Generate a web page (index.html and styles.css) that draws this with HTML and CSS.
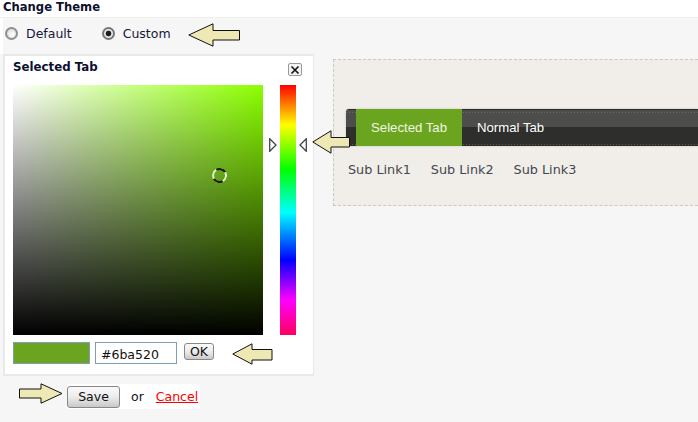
FILE: index.html
```html
<!DOCTYPE html>
<html lang="en">
<head>
<meta charset="utf-8">
<title>Change Theme</title>
<link rel="stylesheet" href="styles.css">
</head>
<body>
<h1 class="title">Change Theme</h1>
<main class="content">
  <div class="radios">
    <span class="radio"></span><span class="radio-label first">Default</span>
    <span class="radio on"></span><span class="radio-label">Custom</span>
  </div>
  <div class="columns">
    <section class="picker">
      <h2 class="picker-title">Selected Tab</h2>
      <span class="close">
        <svg width="10" height="10" viewBox="0 0 10 10"><path d="M1.500 1.500 8.500 8.500M8.500 1.500 1.500 8.500" stroke="#111" stroke-width="1.600" fill="none"/></svg>
      </span>
      <div class="fields">
        <div class="sv"><span class="marker"></span></div>
        <div class="hue-wrap">
          <svg class="tri tri-l" width="8" height="14" viewBox="0 0 8 14"><path d="M.7.7 7 7 .7 13.300Z" fill="#fff" stroke="#444" stroke-width="1.300"/></svg>
          <div class="hue"></div>
          <svg class="tri tri-r" width="8" height="14" viewBox="0 0 8 14"><path d="M7.300.7 1 7 7.300 13.300Z" fill="#fff" stroke="#444" stroke-width="1.300"/></svg>
        </div>
      </div>
      <div class="value-row">
        <span class="swatch"></span>
        <input class="hex" type="text" value="#6ba520">
        <button class="btn ok" type="button">OK</button>
      </div>
    </section>
    <section class="preview">
      <div class="tabbar">
        <span class="tab selected">Selected Tab</span>
        <span class="tab">Normal Tab</span>
      </div>
      <nav class="sublinks"><a>Sub Link1</a><a>Sub Link2</a><a>Sub Link3</a></nav>
    </section>
  </div>
  <div class="actions">
    <div class="actions-inner">
      <button class="btn save" type="button">Save</button>
      <span class="or">or</span>
      <a class="cancel" href="#">Cancel</a>
    </div>
  </div>
</main>
<svg class="arrow a1" width="53" height="24" viewBox="0 0 53 24"><path d="M.8 12 25 .8V7.500H51.500V17H25V23.200Z" fill="#eee8b4" stroke="#111"/></svg>
<svg class="arrow a2" width="39" height="24" viewBox="0 0 39 24"><path d="M.8 12 19 .8V7.500H37.500V17H19V23.200Z" fill="#eee8b4" stroke="#111"/></svg>
<svg class="arrow a3" width="41" height="22" viewBox="0 0 41 22"><path d="M.8 11 20 .8V6.500H40V17H20V21.200Z" fill="#eee8b4" stroke="#111"/></svg>
<svg class="arrow a4" width="44" height="21" viewBox="0 0 44 21"><path d="M43 10.500 22 .8V6H.5V15H22V20.200Z" fill="#eee8b4" stroke="#111"/></svg>
</body>
</html>
```
FILE: styles.css
```css
* { box-sizing: border-box; }
html, body { margin: 0; height: 100%; }
body {
  position: relative;
  width: 698px;
  height: 422px;
  overflow: hidden;
  background: #fff;
  font-family: "DejaVu Sans", Verdana, sans-serif;
  color: #111;
}
.title {
  margin: 0;
  height: 18px;
  padding: 1px 0 0 3px;
  font-size: 11.600px;
  line-height: 13px;
  font-weight: bold;
  color: #0c1030;
  border-bottom: 1px solid #f0f0ea;
}
.content {
  height: 404px;
  padding-left: 3px;
  background: #f6f6f6;
}
.radios {
  display: flex;
  align-items: center;
  height: 36px;
  padding: 0 0 5px 2px;
  font-size: 12.500px;
  color: #16163a;
  box-shadow: -3px 0 0 #fff;
}
.radio {
  width: 13px;
  height: 13px;
  border-radius: 50%;
  border: 2px solid #8f8f8f;
  background: radial-gradient(circle at 60% 60%, #f8f8f8 20%, #d4d4d4 90%);
}
.radio.on {
  border-color: #777;
  background: radial-gradient(circle, #1c1c1c 0 2.500px, #e8e8e8 3.200px);
}
.radio-label { margin-left: 8px; }
.radio-label.first { margin-right: 30px; }
.columns {
  display: flex;
  gap: 19px;
}
.picker {
  position: relative;
  flex: none;
  width: 311px;
  height: 322px;
  padding: 0 8px;
  background: #fff;
  border: 2px solid #e9e9e9;
  border-right-width: 1px;
}
.picker-title {
  margin: 0;
  height: 29px;
  padding-top: 4px;
  font-size: 11.800px;
  line-height: 14px;
  font-weight: bold;
  color: #0c1030;
}
.close {
  position: absolute;
  top: 7px;
  right: 11px;
  display: flex;
  align-items: center;
  justify-content: center;
  width: 14px;
  height: 13px;
  background: #f2f2f2;
  border: 1px solid #999;
  border-radius: 2px;
}
.fields {
  display: flex;
  height: 250px;
}
.sv {
  position: relative;
  flex: none;
  width: 250px;
  height: 250px;
  background:
    linear-gradient(to bottom, rgba(0,0,0,0), #000),
    linear-gradient(to right, #fff, #8cff00);
}
.marker {
  position: absolute;
  left: 199px;
  top: 83px;
  width: 15px;
  height: 15px;
  border-radius: 50%;
  border: 2px solid;
  border-color: #1c1c10 #e4f2c8 #1c1c10 #e4f2c8;
  transform: rotate(15deg);
}
.hue-wrap {
  position: relative;
  margin-left: 17px;
  width: 16px;
}
.hue {
  width: 16px;
  height: 250px;
  background: linear-gradient(to bottom,
    #ff0000 0%, #ffff00 16%, #00ff00 34%, #00ffff 51%,
    #0000ff 70%, #ff00ff 86%, #ff0060 100%);
}
.tri { position: absolute; top: 53px; }
.tri-l { left: -11px; }
.tri-r { right: -11px; }
.value-row {
  display: flex;
  align-items: flex-start;
  margin-top: 7px;
}
.swatch {
  flex: none;
  width: 77px;
  height: 22px;
  background: #6ba520;
  border: 1px solid #7f9db9;
}
.hex {
  flex: none;
  width: 82px;
  height: 22px;
  margin: 0 0 0 5px;
  padding: 2px 5px 0;
  font: 12.500px "DejaVu Sans", Verdana, sans-serif;
  color: #111;
  background: #fff;
  border: 1px solid #7f9db9;
  border-radius: 0;
  outline: none;
}
.btn {
  font: 12.500px/1 "DejaVu Sans", Verdana, sans-serif;
  color: #111;
  padding: 2px 0 0;
  border: 1px solid #888;
  border-radius: 3px;
  background: linear-gradient(to bottom, #fafafa, #ececec 50%, #c9c9c9);
}
.ok {
  width: 30px;
  height: 17px;
  margin: 1px 0 0 7px;
}
.preview {
  flex: none;
  width: 365px;
  height: 147px;
  margin-top: 5px;
  padding: 49px 0 0 12px;
  background: #f1eee9;
  border: 1px dashed #c9c9c5;
  border-right: none;
}
.tabbar {
  display: flex;
  height: 37px;
  padding-left: 10px;
  border-radius: 3px 0 0 3px;
  background:
    repeating-linear-gradient(to right, #6a6a68 0 1px, transparent 1px 3px) 0 3px / 100% 1px no-repeat,
    repeating-linear-gradient(to right, #555 0 1px, transparent 1px 3px) 0 35px / 100% 1px no-repeat,
    linear-gradient(to bottom, #2a2a2a 0 1px, #4d4d4c 1px 18px, #2e2e2c 18px 100%);
  box-shadow: 0 0 2px #bbb;
  font-family: "Liberation Sans", Arial, sans-serif;
  font-size: 13.200px;
  color: #fff;
}
.tab {
  display: flex;
  align-items: center;
  padding: 0 15px;
  white-space: nowrap;
}
.tab.selected {
  width: 106px;
  background: #6ba520;
  color: #eef5e0;
}
.sublinks {
  display: flex;
  gap: 20px;
  margin-top: 16px;
  padding-left: 2px;
  font-size: 12.800px;
  line-height: 16px;
  color: #44464e;
}
.actions {
  padding: 8px 0 0 64px;
}
.actions-inner {
  display: flex;
  align-items: center;
  width: 133px;
  height: 25px;
  background: #fff;
  font-size: 12.500px;
}
.save {
  width: 53px;
  height: 22px;
}
.or { margin-left: 11px; color: #111; }
.cancel { margin-left: 12px; color: #f00; }
.arrow { position: absolute; }
.a1 { left: 188px; top: 23px; }
.a2 { left: 312px; top: 130px; }
.a3 { left: 232px; top: 343px; }
.a4 { left: 19px; top: 383px; }
```
